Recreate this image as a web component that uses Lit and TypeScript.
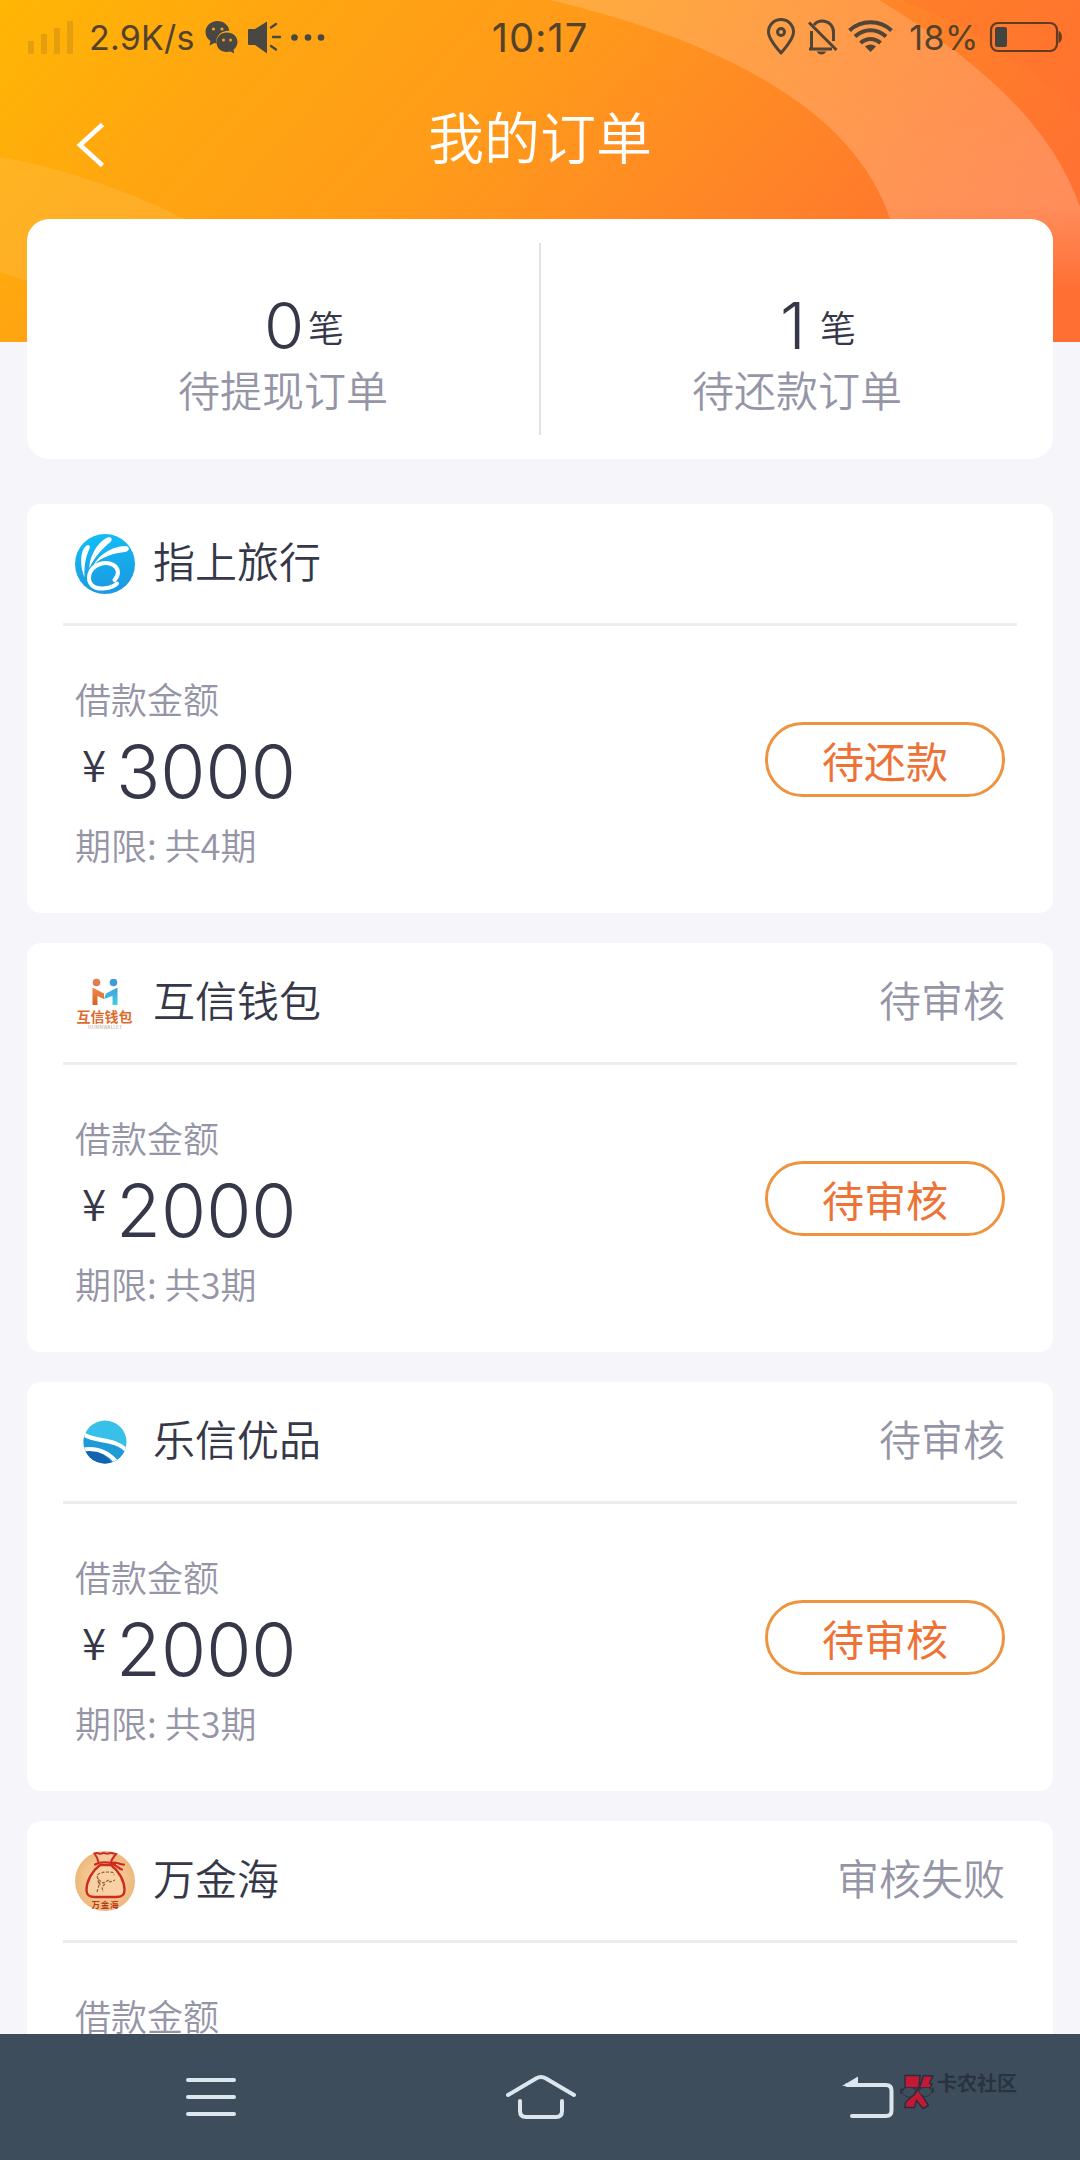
import { LitElement, html, svg, css, nothing, TemplateResult } from "lit";
import { customElement, property } from "lit/decorators.js";

interface Order {
  logo: "travel" | "wallet" | "goods" | "bag";
  name: string;
  status?: string;
  amount?: string;
  periods?: number;
  action?: string;
}

const ORDERS: Order[] = [
  { logo: "travel", name: "指上旅行", amount: "3000", periods: 4, action: "待还款" },
  { logo: "wallet", name: "互信钱包", status: "待审核", amount: "2000", periods: 3, action: "待审核" },
  { logo: "goods", name: "乐信优品", status: "待审核", amount: "2000", periods: 3, action: "待审核" },
  { logo: "bag", name: "万金海", status: "审核失败" },
];

const LOGOS: Record<Order["logo"], TemplateResult> = {
  travel: svg`
    <defs><linearGradient id="sky" x1="0" y1="0" x2="0.2" y2="1">
      <stop offset="0" stop-color="#10c0f8"/><stop offset="1" stop-color="#1c9ae2"/>
    </linearGradient></defs>
    <circle cx="30" cy="30" r="30" fill="url(#sky)"/>
    <path d="M9.500 43C5 33 4.500 17 11.500 11.500C14 10 15.500 12 14.500 14.500C11 22 9 31 9.500 43Z" fill="#fff"/>
    <path d="M14.500 34C14 24 22 8 32.500 3.500C36.500 2.500 38 5.500 35.500 8C28 14 20 22 14.500 34Z" fill="#fff"/>
    <path d="M18.500 31.500C23 22 36 12.500 50 12C55 12.200 55 16.500 51 17.800C39 19.500 27 22 18.500 31.500Z" fill="#fff"/>
    <path d="M39.500 46C44.500 41 44 34.500 38.500 31C30 26.500 17.500 30.500 14.500 40C12 50 19 55 28 54.500C35 54 39 52.500 42 49.500" fill="none" stroke="#fff" stroke-width="4" stroke-linecap="round"/>`,
  wallet: svg`
    <defs>
      <linearGradient id="wo" x1="0" y1="0" x2="0" y2="1"><stop offset="0" stop-color="#f08a4a"/><stop offset="1" stop-color="#d8602a"/></linearGradient>
      <linearGradient id="wb" x1="0" y1="0" x2="0" y2="1"><stop offset="0" stop-color="#3f9fe0"/><stop offset="1" stop-color="#3fd0e0"/></linearGradient>
    </defs>
    <circle cx="21.500" cy="9.500" r="3.800" fill="#dd7d50"/>
    <circle cx="38.500" cy="9.500" r="3.800" fill="#3f9cd8"/>
    <path d="M17.500 14.500L29 20.500V26L22.500 23V32H17.500Z" fill="url(#wo)"/>
    <path d="M42.500 14.500L31 20.500L29 26L37.500 23V32H42.500Z" fill="url(#wb)"/>
    <text x="1.500" y="48.500" font-size="14" font-weight="700" textLength="56" fill="#dc6c2e">互信钱包</text>
    <text x="13" y="56" font-size="5" textLength="34" fill="#b89a90">HUXINWALLET</text>`,
  goods: svg`
    <defs><clipPath id="disc"><circle cx="30" cy="30" r="21.500"/></clipPath></defs>
    <g clip-path="url(#disc)">
      <rect x="8" y="8" width="44" height="44" fill="#38c0e8"/>
      <path d="M8 23C22 29 40 27 52 38V52H8Z" fill="#1e9ad6"/>
      <path d="M8 38C22 38 31 42 38 52H8Z" fill="#1562ae"/>
      <path d="M8 22C21 31 40 25 53 40" fill="none" stroke="#fff" stroke-width="4.200"/>
      <path d="M8 37.500C22 35.500 34 40 43 52" fill="none" stroke="#fff" stroke-width="4"/>
    </g>`,
  bag: svg`
    <defs><radialGradient id="sand"><stop offset="0" stop-color="#fbdcae"/><stop offset="1" stop-color="#eeb87c"/></radialGradient></defs>
    <circle cx="30" cy="30" r="30" fill="url(#sand)"/>
    <path d="M23.500 11C22.500 7 21 4.500 19.500 2.500C23 1 25 4 27.500 2.200C30 1 31.500 4 34 2.200C36.500 1.200 39 2.500 41 3C38.500 6 36.500 8.500 36 11" fill="#f6c9a0" stroke="#cf2a1e" stroke-width="2"/>
    <path d="M20 13.500C25 10.500 34 10.500 40 13.500M36 12C41 10 45 14 49 13.500M37 13C42 14 44 18 47 18.500" fill="none" stroke="#cf2a1e" stroke-width="2.200" stroke-linecap="round"/>
    <path d="M25 14C17 20 11.500 30 11.500 39C11.500 45 15 46 20 46H41C46 46 49.500 45 49.500 39C49.500 30 44 20 36 14Z" fill="#f8d2a4" stroke="#cf2a1e" stroke-width="2.400"/>
    <path d="M22 41L24 34L22 24C27 20 34 21 38 21.500L39 24M25 34L24 29L28 32L34 29L35 31L40 29M30 33L27 36L28 41" fill="none" stroke="#9a5a3c" stroke-width="1.200" stroke-dasharray="3 1.500"/>
    <text x="16.500" y="56.500" font-size="8.500" font-weight="700" textLength="27" fill="#b5371c">万金海</text>`,
};

@customElement("brand-logo")
class BrandLogo extends LitElement {
  @property() kind: Order["logo"] = "travel";
  static styles = css`
    :host { display: block; width: 60px; height: 60px; }
    svg { display: block; font-family: "Noto Sans CJK SC", sans-serif; }
  `;
  render() {
    return html`<svg width="60" height="60" viewBox="0 0 60 60">${LOGOS[this.kind]}</svg>`;
  }
}

@customElement("order-card")
class OrderCard extends LitElement {
  @property({ attribute: false }) order!: Order;
  static styles = css`
    :host { display: block; flex: none; height: 409px; box-sizing: border-box; background: #fff; border-radius: 14px; padding: 0 36px; font-family: "Noto Sans CJK SC", sans-serif; font-weight: 350; }
    .head { display: flex; align-items: center; height: 119px; padding: 0 12px; border-bottom: 3px solid #ededee; font-size: 42px; line-height: 60px; color: #363849; }
    .name { margin: 0 0 7px 18px; flex: 1; }
    .status { margin-bottom: 7px; color: #9595a7; }
    .body { display: flex; justify-content: space-between; padding: 45px 12px 0; }
    .label { font-size: 36px; line-height: 54px; color: #9595a7; }
    .sum { box-sizing: border-box; display: flex; height: 92px; padding-top: 3px; align-items: flex-start; color: #363849; }
    .yen { font-size: 44px; line-height: 71px; width: 41px; padding-left: 7px; box-sizing: border-box; }
    .num { font-family: "Inter", sans-serif; font-weight: 300; font-size: 73.2px; line-height: 88px; }
    .pill { box-sizing: border-box; width: 240px; height: 75px; margin-top: 51px; border: 3px solid #ee9440; border-radius: 38px; display: flex; align-items: center; justify-content: center; font-size: 42px; font-weight: 400; color: #ee7236; }
  `;
  render() {
    const o = this.order;
    return html`
      <div class="head">
        <brand-logo .kind=${o.logo}></brand-logo>
        <span class="name">${o.name}</span>
        ${o.status ? html`<span class="status">${o.status}</span>` : nothing}
      </div>
      <div class="body">
        <div>
          <div class="label">借款金额</div>
          ${o.amount
            ? html`<div class="sum"><span class="yen">¥</span><span class="num">${o.amount}</span></div>
                <div class="label">期限: 共${o.periods}期</div>`
            : nothing}
        </div>
        ${o.action ? html`<div class="pill">${o.action}</div>` : nothing}
      </div>`;
  }
}

@customElement("app-root")
class AppRoot extends LitElement {
  static styles = css`
    :host { display: flex; flex-direction: column; width: 1080px; height: 2160px; overflow: hidden; background: #f5f5fa; font-family: "Inter", "Noto Sans CJK SC", sans-serif; font-weight: 400; }
    .screen { flex: 1; min-height: 0; overflow: hidden; display: flex; flex-direction: column; }
    .hero { position: relative; flex: none; height: 342px; }
    .waves { position: absolute; inset: 0; display: block; }
    .front { position: relative; }
    .bar { display: grid; grid-template-columns: 1fr auto 1fr; align-items: center; height: 74px; padding: 0 17px; color: #54432c; }
    .left { display: flex; align-items: center; padding-left: 10px; }
    .right { display: flex; align-items: center; justify-content: flex-end; }
    .rate { font-size: 34px; margin: 0 10px 0 15px; letter-spacing: 0.2px; }
    .clock { font-size: 40px; letter-spacing: 0.9px; }
    .pct { font-size: 34px; letter-spacing: 0.5px; margin: 0 10px 0 15px; }
    .title { display: grid; grid-template-columns: 1fr auto 1fr; align-items: center; height: 130px; color: #fff; font-size: 56px; }
    .heading { margin-bottom: 10px; font-weight: 350; }
    .back { margin: 12px 0 0 76px; }
    .stats { position: relative; flex: none; margin: -123px 27px 0; height: 240px; background: #fff; border-radius: 22px; display: flex; align-items: center; }
    .rule { width: 2px; height: 192px; background: #e2e2e6; }
    .stat { flex: 1; display: flex; flex-direction: column; align-items: center; padding-top: 34px; }
    .count { display: flex; align-items: baseline; width: 156px; justify-content: center; margin-left: 42px; color: #363849; font-size: 65px; font-weight: 300; line-height: 72px; }
    .digits { min-width: 36px; }
    .unit { font-size: 36px; font-weight: 350; margin-left: 4px; position: relative; top: -7px; }
    .caption { font-size: 42px; font-weight: 350; line-height: 60px; margin-top: -10px; color: #9595a7; }
    .list { display: flex; flex-direction: column; gap: 30px; padding: 45px 27px 0; }
    .nav { flex: none; height: 126px; background: #3d4d5c; display: grid; grid-template-columns: 361px 359px 360px; align-items: center; justify-items: center; }
    .nav svg { display: block; }
    .menu { margin-left: 61px; }
    .tail { display: flex; align-items: center; justify-self: start; margin-left: 121px; }
    .mark { display: flex; align-items: center; gap: 3px; margin: -10px 0 0 5px; color: #28333f; font-size: 20px; font-weight: 700; line-height: 28px; }
    .brand { margin-top: -16px; }
  `;

  private waves() {
    return html`<svg class="waves" width="1080" height="342" viewBox="0 0 1080 342">
      <defs>
        <linearGradient id="bg" gradientUnits="userSpaceOnUse" x1="0" y1="0" x2="720" y2="640">
          <stop offset="0" stop-color="#ffb604"/><stop offset="0.22" stop-color="#ffa610"/>
          <stop offset="0.45" stop-color="#ff9b19"/><stop offset="0.6" stop-color="#ff8e22"/>
          <stop offset="0.83" stop-color="#ff7a2c"/><stop offset="1" stop-color="#ff6f34"/>
        </linearGradient>
        <linearGradient id="band" x1="0" y1="0" x2="0" y2="1">
          <stop offset="0" stop-color="#fff" stop-opacity="0.16"/><stop offset="0.6" stop-color="#fff" stop-opacity="0.2"/>
          <stop offset="0.85" stop-color="#fff" stop-opacity="0"/>
        </linearGradient>
      </defs>
      <rect width="1080" height="342" fill="url(#bg)"/>
      <path d="M550 0C740 45 860 120 891 222V342H1080V207C1050 120 970 55 879 0Z" fill="url(#band)"/>
      <path d="M900 0C970 26 1030 66 1080 114V0Z" fill="#ff6a30" fill-opacity="0.2"/>
      <path d="M0 157C70 170 130 192 185 219H200V342L27 281L0 272Z" fill="#ffc050" fill-opacity="0.35"/>
    </svg>`;
  }

  private statusBar() {
    return html`<div class="bar">
      <div class="left">
        <svg width="47" height="34" viewBox="0 0 47 34" fill="#c98b14" fill-opacity="0.5">
          <rect x="1" y="21" width="6" height="13" rx="1"/><rect x="14" y="14" width="6" height="20" rx="1"/>
          <rect x="27" y="8" width="6" height="26" rx="1"/><rect x="40" y="1" width="6" height="33" rx="1"/>
        </svg>
        <span class="rate">2.9K/s</span>
        <svg width="122" height="36" viewBox="0 0 122 36" fill="#494744">
          <path d="M12.500 2C5.500 2 0.500 7 0.500 13C0.500 17 2.500 20 5.500 22L4.500 26.500L9.500 24C10.500 24.200 11 24.200 11.500 24.200C10.500 17 16 11.500 24.500 11.800C23.500 6 18.500 2 12.500 2Z"/>
          <path d="M22 13.500C28 13.500 32.500 17.500 32.500 23C32.500 26 31 29 28.500 30.800L29.200 34.500L25.500 32.500C17 34.500 11.500 29.500 11.500 23.500C11.500 17.500 16 13.500 22 13.500Z"/>
          <g fill="#f3a31c"><circle cx="8.500" cy="10" r="1.600"/><circle cx="17" cy="10" r="1.600"/><circle cx="18.500" cy="21" r="1.500"/><circle cx="25.500" cy="21" r="1.500"/></g>
          <path d="M44 10H50L62 2.500V34.500L50 26H44Q43 26 43 25V11Q43 10 44 10Z"/>
          <path d="M66 8.500L71 5M68 18H75M66 27L71 30.500" stroke="#494744" stroke-width="2.400" stroke-linecap="round"/>
          <circle cx="89.500" cy="18.500" r="3.300"/><circle cx="103" cy="18.500" r="3.300"/><circle cx="116" cy="18.500" r="3.300"/>
        </svg>
      </div>
      <span class="clock">10:17</span>
      <div class="right">
        <svg width="128" height="38" viewBox="0 0 128 38" fill="none" stroke="#4f4538" stroke-width="3">
          <path d="M15 35C8 27 2.500 20 2.500 14A12.500 12.500 0 0 1 27.500 14C27.500 20 22 27 15 35Z" stroke-linejoin="round"/>
          <circle cx="15" cy="14" r="3.500"/>
          <path d="M45.500 31V13M48 7C50.500 3.500 53 3 56 3C63 3 67.500 8 67.500 14V23M43 31H66M43 4.500L70.500 32"/>
          <path d="M50.500 33.500H60.500Q58.500 36.500 55.500 36.500Q52.500 36.500 50.500 33.500Z" fill="#4f4538" stroke="none"/>
          <path d="M83.500 12.500C95 1.500 114 1.500 125.500 12.500M89 18.500C98 10 111 10 120 18.500M94.500 25C100.500 19.500 108.500 19.500 114.500 25" stroke-width="4"/>
          <path d="M104.500 34L99 28.500C102 25.800 107 25.800 110 28.500Z" fill="#4f4538" stroke="none"/>
        </svg>
        <span class="pct">18%</span>
        <svg width="74" height="32" viewBox="0 0 74 32">
          <rect x="2" y="2" width="66" height="28" rx="7" fill="none" stroke="#633b20" stroke-width="2.200"/>
          <rect x="6" y="6" width="12" height="20" rx="2" fill="#42443f"/>
          <path d="M69.500 10C74 11 74 21 69.500 22Z" fill="#633b20"/>
        </svg>
      </div>
    </div>`;
  }

  render() {
    return html`
      <div class="screen">
        <div class="hero">
          ${this.waves()}
          <div class="front">
            ${this.statusBar()}
            <div class="title">
              <svg class="back" width="30" height="46" viewBox="0 0 30 46"><path d="M26.500 2.500L4 23L26.500 43.500" fill="none" stroke="#fff" stroke-width="4.600"/></svg>
              <span class="heading">我的订单</span>
            </div>
          </div>
        </div>
        <div class="stats">
          <div class="stat"><div class="count"><span class="digits">0</span><span class="unit">笔</span></div><div class="caption">待提现订单</div></div>
          <div class="rule"></div>
          <div class="stat"><div class="count"><span class="digits">1</span><span class="unit">笔</span></div><div class="caption">待还款订单</div></div>
        </div>
        <div class="list">${ORDERS.map((o) => html`<order-card .order=${o}></order-card>`)}</div>
      </div>
      <div class="nav">
        <svg class="menu" width="50" height="40" viewBox="0 0 50 40"><path d="M2 3H48M2 20H48M2 37H48" stroke="#dce6ef" stroke-width="4" stroke-linecap="round"/></svg>
        <svg width="72" height="46" viewBox="0 0 72 46" fill="none" stroke="#dce6ef" stroke-width="4" stroke-linecap="round" stroke-linejoin="round"><path d="M3 21L31 4.500Q36 1.500 41 4.500L69 21M15 27V37Q15 43 21 43H51Q57 43 57 37V27"/></svg>
        <div class="tail">
          <svg width="54" height="44" viewBox="0 0 54 44"><path d="M6 10H45Q50.500 10 50.500 15.500V35.500Q50.500 41 45 41H11" fill="none" stroke="#dce6ef" stroke-width="4" stroke-linecap="round"/><path d="M1 11L17 1.500V11Z" fill="#dce6ef"/></svg>
          <div class="mark">
            <svg width="34" height="36" viewBox="0 0 34 36" stroke="#2c2d3b" stroke-width="1.500">
              <path d="M5 1.500H20L19 14H5ZM23.500 1.500L33 2L29.500 9L32 10L30 14H19.500Z" fill="#c21a36"/>
              <path d="M14 21L18 15L28.500 31.500L23 34.500L16.500 26.500L14.500 33.500H5L5.500 28.500L10 24Z" fill="#c21a36"/>
              <path d="M2 16Q8 10.500 16 16Q14 23.500 8 23Q2.500 22 2 16ZM18.500 16Q25 11 32 15.500Q31.500 22 26 22.500Q20 22.500 18.500 16Z" fill="#3d4d5c" stroke-width="0.800"/>
              <path d="M1 20V15.500H4M33 13.500V19" fill="none"/>
            </svg>
            <span class="brand">卡农社区</span>
          </div>
        </div>
      </div>`;
  }
}
